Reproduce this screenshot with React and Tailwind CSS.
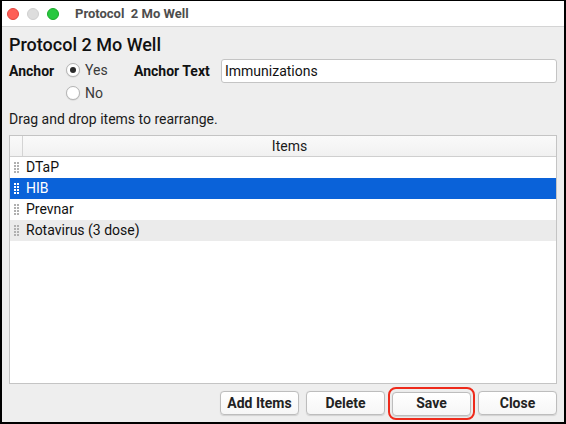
const items = ["DTaP", "HIB", "Prevnar", "Rotavirus (3 dose)"];

function Grip({ light }) {
  const dot = light ? "bg-white" : "bg-[#b0b0b0]";
  return (
    <div className="grid grid-cols-2 gap-x-[1px] gap-y-[1px] w-[5px]">
      {Array.from({ length: 8 }).map((_, i) => (
        <span key={i} className={`block w-[2px] h-[2px] ${dot}`} />
      ))}
    </div>
  );
}

function Radio({ checked, label }) {
  return (
    <div className="h-[20px] flex items-center gap-[5px]">
      <span className="w-[14px] h-[14px] rounded-full border border-[#b5b5b5] bg-white flex items-center justify-center shadow-[0_0.5px_1px_rgba(0,0,0,0.15)]">
        {checked && <span className="w-[6px] h-[6px] rounded-full bg-[#2b2b2b]" />}
      </span>
      <span className="text-[14px] text-[#3a3a3a]">{label}</span>
    </div>
  );
}

function Button({ children }) {
  return (
    <button className="w-[79px] h-[24px] rounded-[4px] border border-[#bdbdbd] bg-gradient-to-b from-white to-[#f6f6f6] text-[14px] font-bold text-[#222] shadow-[0_0.5px_1px_rgba(0,0,0,0.12)]">
      {children}
    </button>
  );
}

export default function App() {
  return (
    <div
      className="w-[566px] h-[424px] bg-[#eeeeee] border-t border-x-2 border-b-2 border-black flex flex-col overflow-hidden"
      style={{ fontFamily: "Roboto, 'Liberation Sans', sans-serif" }}
    >
      <div className="h-[26px] bg-white border-b border-[#d4d4d4] flex items-center shrink-0">
        <div className="flex items-center gap-[8px] pl-[5px]">
          <span className="w-[12px] h-[12px] rounded-full bg-[#fe5f57] border border-[#e2463f]" />
          <span className="w-[12px] h-[12px] rounded-full bg-[#dddddd] border border-[#cfcfcf]" />
          <span className="w-[12px] h-[12px] rounded-full bg-[#28c840] border border-[#1aab29]" />
        </div>
        <span className="ml-[16px] text-[13px] font-bold text-[#4d4d4d] whitespace-pre">Protocol  2 Mo Well</span>
      </div>

      <div className="flex-1 flex flex-col px-[7px] pt-[8px]">
        <h1 className="text-[18px] leading-[20px] font-medium text-[#111]">Protocol 2 Mo Well</h1>

        <div className="flex items-start mt-[4px]">
          <span className="text-[14px] font-bold text-[#111] leading-[24px] w-[57px]">Anchor</span>
          <div className="flex flex-col gap-[3px] pt-[1px] w-[68px]">
            <Radio checked label="Yes" />
            <Radio label="No" />
          </div>
          <span className="text-[14px] font-bold text-[#111] leading-[24px] w-[87px]">Anchor Text</span>
          <div className="flex-1 h-[24px] bg-white border border-[#c4c4c4] rounded-[3px] flex items-center px-[3px] text-[14px] text-[#111]">
            Immunizations
          </div>
        </div>

        <p className="text-[14px] text-[#1a1a1a] mt-[7px] leading-[18px]">Drag and drop items to rearrange.</p>

        <div className="mt-[7px] h-[249px] bg-white border border-[#c4c4c4] flex flex-col">
          <div className="h-[21px] flex border-b border-[#cfcfcf] bg-gradient-to-b from-[#fafafa] to-[#f1f1f1] shrink-0">
            <div className="w-[13px] border-r border-[#d4d4d4]" />
            <div className="flex-1 flex items-center justify-center text-[14px] text-[#1a1a1a]">Items</div>
          </div>
          {items.map((item, i) => {
            const selected = i === 1;
            const alt = i === 3;
            return (
              <div
                key={item}
                className={`h-[21px] flex items-center gap-[7px] pl-[4px] text-[14px] ${
                  selected ? "bg-[#0a62d9] text-white" : alt ? "bg-[#ebebeb] text-[#111]" : "bg-white text-[#111]"
                }`}
              >
                <Grip light={selected} />
                <span>{item}</span>
              </div>
            );
          })}
        </div>

        <div className="flex justify-end items-center gap-[7px] mt-[7px]">
          <Button>Add Items</Button>
          <Button>Delete</Button>
          <div className="rounded-[8px] border-2 border-[#ee2a1b] p-[2px] -m-[4px]">
            <Button>Save</Button>
          </div>
          <Button>Close</Button>
        </div>
      </div>
    </div>
  );
}
